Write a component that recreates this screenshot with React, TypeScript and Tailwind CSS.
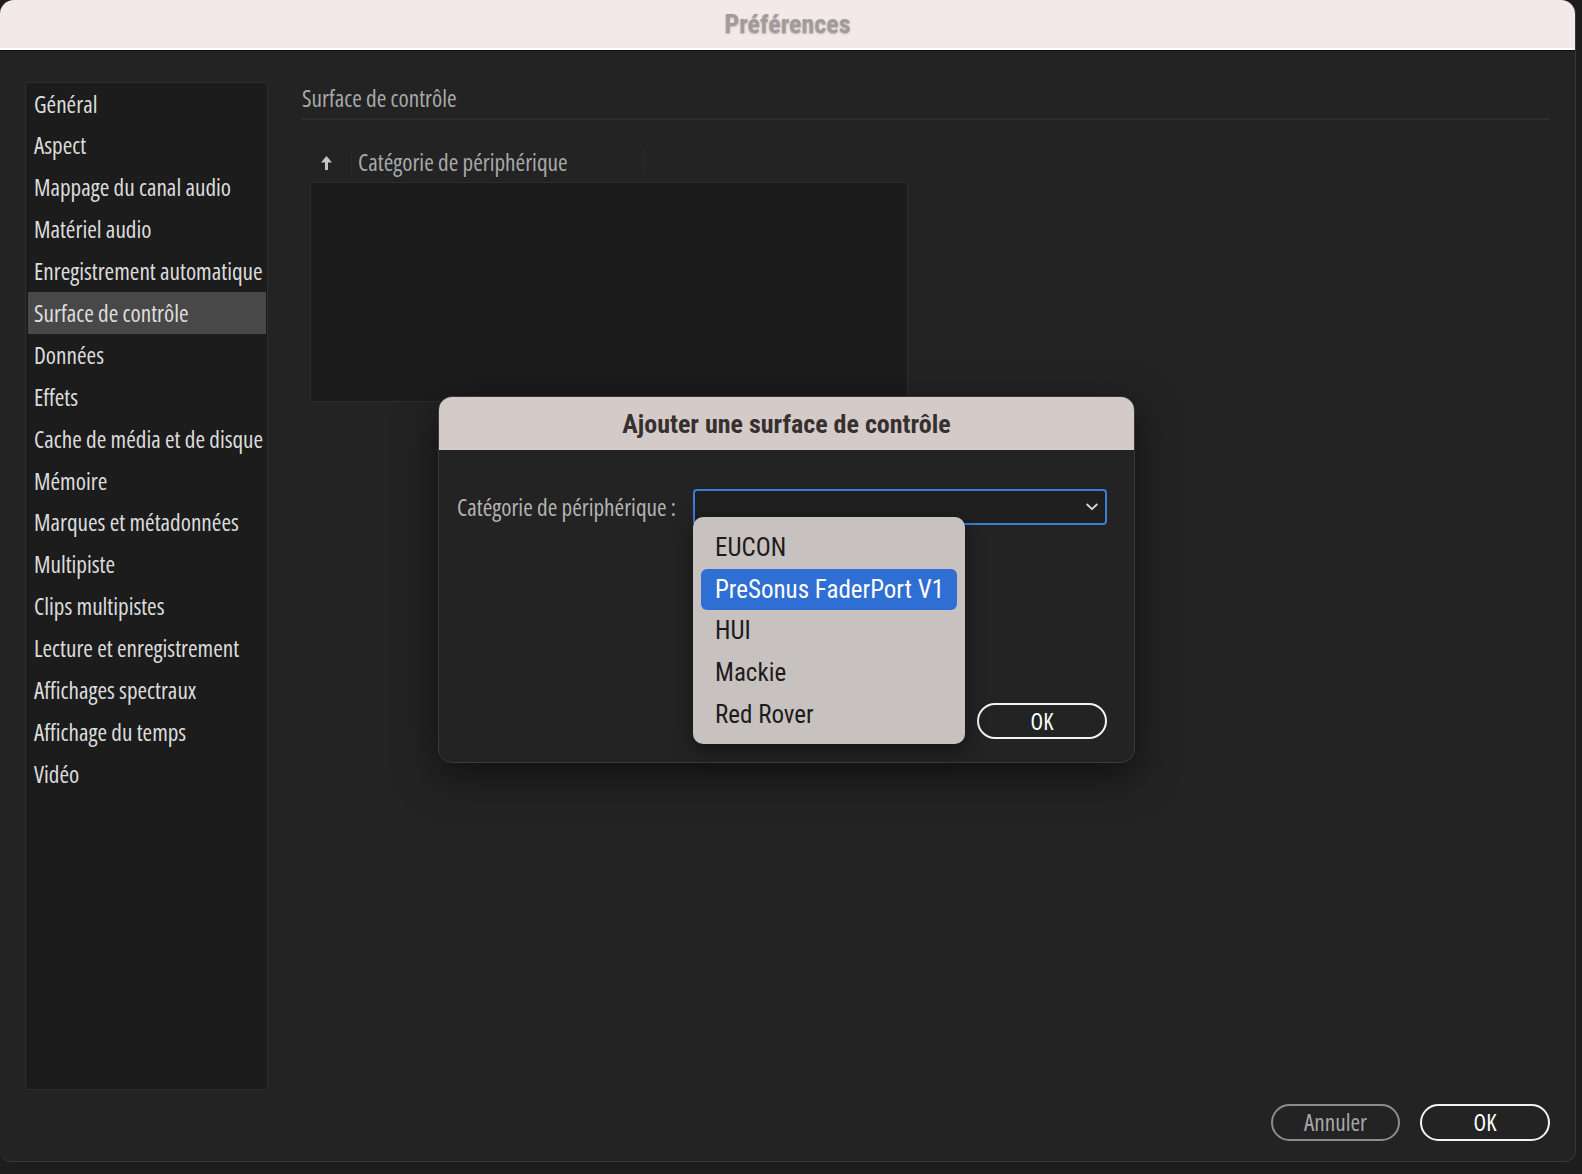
import React from "react";

const items = [
  "Général",
  "Aspect",
  "Mappage du canal audio",
  "Matériel audio",
  "Enregistrement automatique",
  "Surface de contrôle",
  "Données",
  "Effets",
  "Cache de média et de disque",
  "Mémoire",
  "Marques et métadonnées",
  "Multipiste",
  "Clips multipistes",
  "Lecture et enregistrement",
  "Affichages spectraux",
  "Affichage du temps",
  "Vidéo",
];

const menuItems = ["EUCON", "PreSonus FaderPort V1", "HUI", "Mackie", "Red Rover"];

const ui = "font-['Open_Sans',sans-serif] [font-stretch:75%] text-[23.2px]";
const mac = "font-['Roboto_Condensed','Liberation_Sans',sans-serif]";

export default function App() {
  return (
    <div className="w-[1582px] h-[1174px] bg-[#1d1d1d] overflow-hidden">
      <div className="relative w-[1576px] h-[1162px] bg-[#232323] rounded-t-[14px] rounded-b-[12px] border-r border-b border-[#383838] flex flex-col">
        {/* Title bar */}
        <div className="h-[50px] shrink-0 bg-[#f3e9e8] rounded-t-[14px] flex items-center justify-center border-b-2 border-white">
          <span className={`${mac} font-bold text-[26px] text-[#a39b9b] [text-shadow:0_1px_2px_rgba(0,0,0,0.25)] leading-none`}>
            Préférences
          </span>
        </div>
        <div className="h-px bg-[#111]" />

        {/* Body */}
        <div className="flex-1 flex flex-col pl-[25px] pr-[25px] pt-[31px]">
          <div className="flex h-[1008px]">
            {/* Sidebar */}
            <div className="w-[243px] h-full bg-[#1c1c1c] border border-[#2f2f2f] rounded-[3px] pl-[2px] pr-px">
              {items.map((it) => {
                const sel = it === "Surface de contrôle";
                return (
                  <div
                    key={it}
                    className={`h-[41.9px] flex items-center pl-[6px] whitespace-nowrap ${ui} ${
                      sel ? "bg-[#484848] text-[#dedede]" : "text-[#dcdcdc]"
                    }`}
                  >
                    {it}
                  </div>
                );
              })}
            </div>

            {/* Content */}
            <div className="flex-1 ml-[34px] flex flex-col">
              <div className={`${ui} text-[#a9a9a9] h-[32px] leading-[32px]`}>Surface de contrôle</div>
              <div className="mt-[4px] h-[2px] bg-[#2d2d2d]" />
              <div className="mt-[30px] h-[25px] flex items-center pl-[8px]">
                <div className="w-[41px] h-full flex items-center justify-start pl-[10px]">
                  <svg width="13" height="16" viewBox="0 0 13 16">
                    <path d="M6.5 1 L12 7.5 L8 7.5 L8 15 L5 15 L5 7.5 L1 7.5 Z" fill="#c4c4c4" />
                  </svg>
                </div>
                <div className="w-px h-full bg-[#2c2c2c]" />
                <div className={`w-[292px] h-full flex items-center pl-[6px] ${ui} text-[#a9a9a9] whitespace-nowrap`}>
                  Catégorie de périphérique
                </div>
                <div className="w-px h-full bg-[#2c2c2c]" />
              </div>
              <div className="mt-[7px] ml-[8px] w-[598px] h-[220px] bg-[#1c1c1c] border border-[#2e2e2e] rounded-[3px]" />
            </div>
          </div>

          {/* Bottom buttons */}
          <div className="mt-[14px] flex justify-end gap-[20px]">
            <button className={`w-[129px] h-[37px] rounded-full border-2 border-[#8c8c8c] ${ui} text-[#a8a8a8] flex items-center justify-center`}>
              Annuler
            </button>
            <button className={`w-[130px] h-[37px] rounded-full border-2 border-[#f2f2f2] ${ui} text-white flex items-center justify-center`}>
              OK
            </button>
          </div>
        </div>

        {/* Modal dialog */}
        <div className="absolute left-[438px] top-[396px] w-[697px] h-[367px] bg-[#232323] rounded-[14px] border border-[#3a3a3a] shadow-[0_12px_40px_rgba(0,0,0,0.55)] flex flex-col">
          <div className="h-[53px] shrink-0 bg-[#d4cbc8] rounded-t-[13px] flex items-center justify-center">
            <span className={`${mac} font-bold text-[26px] text-[#363030] leading-none`}>
              Ajouter une surface de contrôle
            </span>
          </div>
          <div className="flex-1 flex flex-col pl-[18px] pr-[27px]">
            <div className="mt-[39px] h-[36px] flex items-center">
              <div className={`w-[236px] ${ui} text-[#b4b4b4] whitespace-nowrap`}>Catégorie de périphérique :</div>
              <div className="relative flex-1 h-full">
                <div className="h-full rounded-[4px] border-2 border-[#3d7bd9] bg-[#1f1f1f] flex items-center justify-end pr-[7px]">
                  <svg width="12" height="8" viewBox="0 0 12 8">
                    <path d="M1.2 1.5 L6 6.2 L10.8 1.5" fill="none" stroke="#d8d8d8" strokeWidth="1.8" strokeLinecap="round" strokeLinejoin="round" />
                  </svg>
                </div>
                {/* Dropdown menu */}
                <div className="absolute left-0 top-[28px] w-[272px] h-[227px] bg-[#c7c2c0] rounded-[10px] shadow-[0_6px_20px_rgba(0,0,0,0.45)] px-[8px] pt-[10px] z-10">
                  {menuItems.map((m) => {
                    const sel = m === "PreSonus FaderPort V1";
                    return (
                      <div
                        key={m}
                        className={`h-[41.7px] flex items-center pl-[14px] rounded-[6px] ${mac} text-[25px] whitespace-nowrap ${
                          sel ? "bg-[#2f6ed2] text-white" : "text-[#1c1c1c]"
                        }`}
                      >
                        {m}
                      </div>
                    );
                  })}
                </div>
              </div>
            </div>
            <div className="flex-1" />
            <div className="flex justify-end mb-[23px]">
              <button className={`w-[130px] h-[36px] rounded-full border-2 border-[#f2f2f2] ${ui} text-white flex items-center justify-center`}>
                OK
              </button>
            </div>
          </div>
        </div>
      </div>
    </div>
  );
}
